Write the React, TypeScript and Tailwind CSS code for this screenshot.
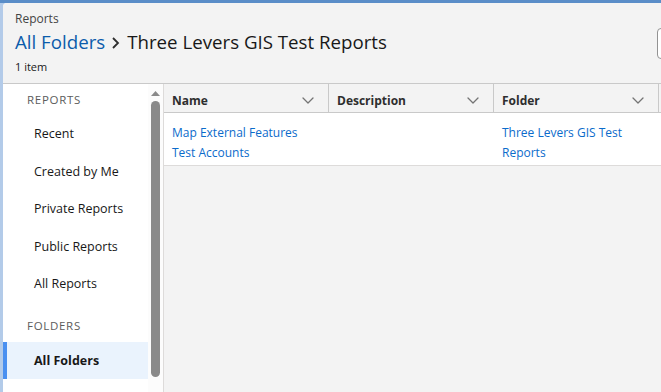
import React from "react";

const Chevron = () => (
  <svg width="12" height="7" viewBox="0 0 12 7" fill="none" className="shrink-0">
    <path d="M1 1l5 5 5-5" stroke="#747474" strokeWidth="1.3" strokeLinecap="round" strokeLinejoin="round" />
  </svg>
);

const navItems = ["Recent", "Created by Me", "Private Reports", "Public Reports", "All Reports"];
const columns = ["Name", "Description", "Folder"];

const App = () => {
  return (
    <div
      className="flex h-[392px] w-[661px] flex-col overflow-hidden bg-[#b3cbe9] text-[13px] text-[#181818]"
      style={{ fontFamily: '"Open Sans", "Noto Sans", sans-serif' }}
    >
      <div className="h-[3px] shrink-0 bg-[#5a8dc8]" />
      <div className="flex min-h-0 flex-1 pl-[3px]">
        <div className="flex min-w-0 flex-1 flex-col overflow-hidden rounded-tl-[4px] bg-white">
          {/* page header */}
          <div className="flex h-[81px] shrink-0 border-b border-[#c9c9c9] bg-[#f3f3f3] pl-3 pt-[8px]">
            <div className="flex-1">
              <div className="h-[16px] text-[12px] leading-[16px] text-[#444]">Reports</div>
              <div className="mt-[2px] flex h-[26px] items-center text-[18.7px] leading-[26px]">
                <span className="text-[#0b5cab]">All Folders</span>
                <svg width="10" height="14" viewBox="0 0 10 14" className="mx-[6px] mt-[2px]">
                  <path d="M2 2l5 5-5 5" stroke="#2e2e2e" strokeWidth="1.8" fill="none" />
                </svg>
                <span className="text-[#181818]">Three Levers GIS Test Reports</span>
              </div>
              <div className="mt-[4px] text-[11px] leading-[16px] text-[#181818]">1 item</div>
            </div>
            <div className="mr-[-40px] mt-[17px] h-[31px] w-[44px] shrink-0 rounded-[4px] border border-[#939393] bg-white" />
          </div>

          <div className="flex min-h-0 flex-1">
            {/* sidebar */}
            <div className="flex w-[161px] shrink-0 border-r border-[#dddbda] bg-white">
              <div className="w-[145px] shrink-0">
                <div className="flex h-[32px] items-end pb-[8px] pl-[24px] text-[11.5px] leading-[16px] tracking-[0.7px] text-[#5c5c5c]">
                  REPORTS
                </div>
                {navItems.map((item) => (
                  <div key={item} className="flex h-[37.5px] items-center pl-[31px] text-[12.5px] text-[#181818]">
                    {item}
                  </div>
                ))}
                <div className="flex h-[38.5px] items-end pb-[8px] pl-[24px] text-[11.5px] leading-[16px] tracking-[0.7px] text-[#5c5c5c]">
                  FOLDERS
                </div>
                <div className="flex h-[37px] items-center border-l-4 border-[#4a90f0] bg-[#eaf3fd] pl-[27px] pt-[2px] text-[12.5px] font-bold text-[#181818]">
                  All Folders
                </div>
              </div>
              <div className="flex w-[15px] flex-col items-center bg-[#fcfcfc] pt-[7px]">
                <svg width="9" height="5" viewBox="0 0 9 5">
                  <path d="M0 5L4.5 0 9 5z" fill="#8a8a8a" />
                </svg>
                <div className="mt-[5px] h-[276px] w-[9px] rounded-full bg-[#8a8a8a]" />
              </div>
            </div>

            {/* table */}
            <div className="flex min-w-0 flex-1 flex-col bg-[#f3f3f3]">
              <div className="flex h-[29px] shrink-0 border-b border-[#c9c9c9] bg-[#f3f3f3]">
                {columns.map((col) => (
                  <div
                    key={col}
                    className="flex w-[165px] shrink-0 items-center justify-between border-r border-[#c9c9c9] pl-2 pr-[14px] pt-[5px] text-[12px] font-bold text-[#2e2e2e]"
                  >
                    <span>{col}</span>
                    <Chevron />
                  </div>
                ))}
              </div>
              <div className="flex h-[53px] shrink-0 border-b border-[#dddbda] bg-white pt-[10px] text-[12px] leading-[20px]">
                <div className="w-[165px] shrink-0 pl-2 text-[#0b6bcb]">
                  Map External Features
                  <br />
                  Test Accounts
                </div>
                <div className="w-[165px] shrink-0 pl-2" />
                <div className="w-[165px] shrink-0 pl-2 text-[#0b6bcb]">
                  Three Levers GIS Test
                  <br />
                  Reports
                </div>
              </div>
            </div>
          </div>
        </div>
      </div>
    </div>
  );
};

export default App;
